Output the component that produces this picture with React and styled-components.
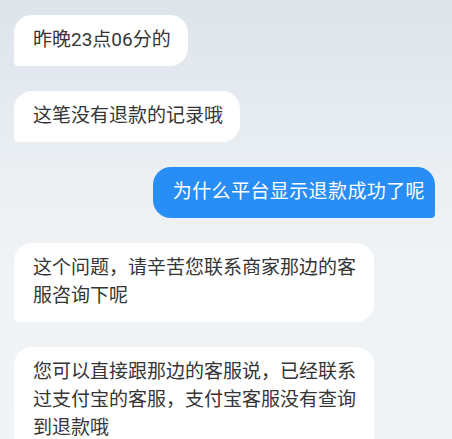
import React from 'react';
import styled, { createGlobalStyle } from 'styled-components';

const GlobalStyle = createGlobalStyle`
    html, body {
        margin: 0;
        padding: 0;
        overflow: hidden;
    }
    * {
        box-sizing: border-box;
    }
`

const messages = [
    { id: 1, mine: false, text: '昨晚23点06分的' },
    { id: 2, mine: false, text: '这笔没有退款的记录哦' },
    { id: 3, mine: true, text: '为什么平台显示退款成功了呢' },
    { id: 4, mine: false, text: '这个问题，请辛苦您联系商家那边的客服咨询下呢' },
    { id: 5, mine: false, text: '您可以直接跟那边的客服说，已经联系过支付宝的客服，支付宝客服没有查询到退款哦' },
];

function App() {
    return (
        <>
            <GlobalStyle />
            <Chat>
                {messages.map(m => (
                    <Bubble key={m.id} $mine={m.mine}>{m.text}</Bubble>
                ))}
            </Chat>
        </>
    );
}

const Chat = styled.div`
    width: 452px;
    height: 439px;
    overflow: hidden;
    display: flex;
    flex-direction: column;
    gap: 25.5px;
    padding: 15px 17px 0 14px;
    background: linear-gradient(180deg, #dde4ea 0%, #e9eef2 35%, #f0f3f6 60%, #f1f4f7 100%);
    font-family: Roboto, "Noto Sans CJK SC", sans-serif;
`

const Bubble = styled.div`
    flex-shrink: 0;
    align-self: ${p => p.$mine ? 'flex-end' : 'flex-start'};
    max-width: 360px;
    padding: ${p => p.$mine ? '11.25px 10px 11.25px 20px' : '11.25px 17px 11.25px 19px'};
    font-size: 19px;
    line-height: 28px;
    letter-spacing: ${p => p.$mine ? '0.4px' : '0'};
    color: ${p => p.$mine ? '#ffffff' : '#353535'};
    background-color: ${p => p.$mine ? '#288ef6' : '#ffffff'};
    border-radius: ${p => p.$mine ? '18px 18px 4px 18px' : '18px 18px 18px 4px'};
`

export default App;
